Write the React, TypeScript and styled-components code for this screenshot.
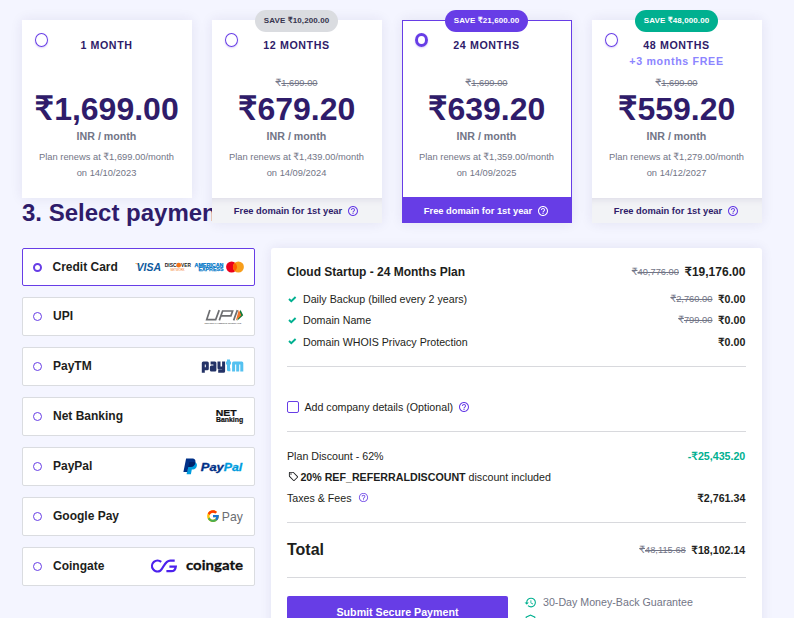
import React from 'react';
import styled, { createGlobalStyle, css } from 'styled-components';
import { MdHelpOutline, MdHistory, MdOutlineSell, MdOutlineVerifiedUser } from 'react-icons/md';
import { FcGoogle } from 'react-icons/fc';

const GlobalStyle = createGlobalStyle`
  * {
    box-sizing: border-box;
  }

  body {
    margin: 0;
    background: #f4f5ff;
    color: #1d1e20;
    font-family: 'Liberation Sans', Arial, sans-serif;
    overflow: hidden;
  }
`;

const Page = styled.main`
  width: 794px;
  height: 618px;
  padding: 20px 32px 0 22px;
  overflow: hidden;
`;

const Rupee = styled.span`
  font-family: Lato, 'DejaVu Sans', sans-serif;
  font-size: 1.07em;
  line-height: 0;
`;

/* ---------- plans ---------- */

const PlanList = styled.section`
  position: relative;
  z-index: 1;
  display: flex;
  align-items: flex-start;
  gap: 20px;
  height: 178px;
`;

const PlanCard = styled.article<{ $selected?: boolean }>`
  position: relative;
  width: 170px;
  flex-shrink: 0;
  background: #fff;
  text-align: center;
  box-shadow: 0 0 12px rgba(47, 28, 106, 0.09);
  ${props => props.$selected && css`
    outline: 1px solid #673de6;
    outline-offset: -1px;
  `}
`;

const SaveBadge = styled.div<{ $bg: string; $color: string }>`
  position: absolute;
  top: -10px;
  left: 43px;
  width: 83px;
  height: 22px;
  border-radius: 11px;
  background: ${props => props.$bg};
  color: ${props => props.$color};
  font-size: 8px;
  font-weight: bold;
  line-height: 21px;
  letter-spacing: 0.1px;
  white-space: nowrap;
`;

const PlanRadio = styled.span<{ $checked?: boolean }>`
  position: absolute;
  top: 13px;
  left: 13px;
  width: 13px;
  height: 14px;
  border-radius: 50%;
  border: ${props => (props.$checked ? 3 : 1)}px solid #673de6;
  box-shadow: 0 1px 2px rgba(103, 61, 230, 0.25);
`;

const PlanBody = styled.div`
  height: 178px;
  padding: 17px 1px 0 0;
`;

const PlanTitle = styled.h3`
  height: 16px;
  margin: 0;
  color: #2f1c6a;
  font-size: 10.67px;
  line-height: 16px;
  letter-spacing: 0.6px;
`;

const PlanBonus = styled.div`
  height: 21px;
  color: #8c85ff;
  font-size: 10.67px;
  font-weight: bold;
  line-height: 17px;
  letter-spacing: 0.67px;
`;

const OldPlanPrice = styled.div`
  height: 17px;
  color: #727586;
  font-size: 9.33px;
  line-height: 18px;
  text-decoration: line-through;
`;

const PlanPrice = styled.div`
  height: 36px;
  color: #2f1c6a;
  font-size: 32px;
  font-weight: bold;
  line-height: 36px;
`;

const PlanUnit = styled.div`
  height: 18px;
  color: #727586;
  font-size: 10.67px;
  font-weight: bold;
  line-height: 18px;
`;

const PlanRenewal = styled.p`
  margin: 4px 0 0;
  color: #727586;
  font-size: 9.33px;
  line-height: 16px;
  white-space: nowrap;
`;

const PlanFooter = styled.div<{ $selected?: boolean }>`
  display: flex;
  align-items: center;
  justify-content: center;
  gap: 5px;
  height: 25px;
  padding-right: 1px;
  background: ${props => (props.$selected ? '#673de6' : '#f2f3f6')};
  color: ${props => (props.$selected ? '#fff' : '#2f1c6a')};
  box-shadow: ${props => (props.$selected ? '0 -1px #673de6' : 'inset 0 8px 8px -8px rgba(47, 28, 106, 0.15)')};
  font-size: 9.33px;
  font-weight: bold;

  svg {
    color: ${props => (props.$selected ? '#fff' : '#673de6')};
  }
`;

const SectionTitle = styled.h2`
  margin: 0;
  height: 50px;
  color: #2f1c6a;
  font-size: 24px;
  line-height: 30px;
`;

/* ---------- payment methods ---------- */

const Checkout = styled.div`
  display: grid;
  grid-template-columns: 233px 491px;
  column-gap: 16px;
  align-items: start;
`;

const MethodList = styled.div`
  display: flex;
  flex-direction: column;
  gap: 11px;
`;

const Method = styled.div<{ $selected?: boolean }>`
  display: flex;
  align-items: center;
  height: ${props => (props.$selected ? 38 : 39)}px;
  padding: 0 10px;
  border: 1px solid ${props => (props.$selected ? '#673de6' : '#dadce0')};
  border-radius: 2px;
  background: #fff;
`;

const MethodRadio = styled.span<{ $checked?: boolean }>`
  width: 9px;
  height: 9px;
  border: ${props => (props.$checked ? 2 : 1)}px solid #673de6;
  border-radius: 50%;
`;

const MethodName = styled.span<{ $selected?: boolean }>`
  margin-left: ${props => (props.$selected ? 10.5 : 11)}px;
  padding-bottom: 1px;
  color: #1d1e20;
  font-size: 12px;
  font-weight: bold;
`;

const MethodLogo = styled.svg`
  display: block;
  margin-left: auto;
  overflow: visible;
  font-family: 'Liberation Sans', Arial, sans-serif;
`;

/* ---------- order summary ---------- */

const Summary = styled.section`
  height: 400px;
  padding: 12px 16px 0;
  border-radius: 3px;
  background: #fff;
  box-shadow: 0 0 12px rgba(47, 28, 106, 0.09);
`;

const Line = styled.div<{ $height: number }>`
  display: flex;
  align-items: center;
  height: ${props => props.$height}px;
  font-size: 10.67px;
  white-space: nowrap;
`;

const PlanName = styled.strong`
  font-size: 12px;
`;

const TotalLabel = styled.strong`
  font-size: 16px;
`;

const Label = styled.span<{ $indent?: number }>`
  margin-left: ${props => props.$indent ?? 0}px;
`;

const OldPrice = styled.s`
  margin-left: auto;
  color: #727586;
  font-size: 9.33px;
`;

const Price = styled.strong<{ $large?: boolean; $discount?: boolean; $after?: boolean }>`
  margin-left: ${props => (props.$after ? '5.5px' : 'auto')};
  margin-right: 0.7px;
  font-size: ${props => (props.$large ? 12 : 10.67)}px;
  color: ${props => (props.$discount ? '#00b090' : '#1d1e20')};
`;

const Divider = styled.hr<{ $top: number; $bottom: number }>`
  height: 1px;
  margin: ${props => props.$top}px 0 ${props => props.$bottom}px;
  border: 0;
  background: #d8d9dd;
`;

const Checkbox = styled.span`
  width: 12px;
  height: 12px;
  border: 1px solid #673de6;
  border-radius: 2px;
`;

const InlineHelp = styled(MdHelpOutline)<{ $faded?: boolean }>`
  margin-left: ${props => (props.$faded ? 6 : 5)}px;
  color: #673de6;
  opacity: ${props => (props.$faded ? 0.85 : 1)};
`;

const TagIcon = styled(MdOutlineSell)`
  margin-left: 1px;
`;

const SubmitRow = styled.div`
  display: flex;
  gap: 16px;
`;

const SubmitButton = styled.button`
  width: 221px;
  height: 32px;
  padding: 0;
  border: 0;
  border-radius: 2px;
  background: #673de6;
  color: #fff;
  font-family: inherit;
  font-size: 10.67px;
  font-weight: bold;
`;

const Guarantees = styled.div`
  display: flex;
  flex-direction: column;
  gap: 6px;
`;

const Guarantee = styled.div`
  display: flex;
  align-items: center;
  gap: 6px;
  height: 12px;
  color: #727586;
  font-size: 10.67px;

  svg {
    color: #00b090;
  }
`;

const Check = () => (
  <svg width="10" height="9" viewBox="0 0 10 9">
    <path d="M2 4 4.3 6.2 8.6 2" fill="none" stroke="#00b090" strokeWidth="1.9" />
  </svg>
);

const CardBrands = () => (
  <MethodLogo width="110" height="14" viewBox="0 0 110 14">
    <path d="M1 3.2h3.6l1.4 4L4.4 5 1 3.6z" fill="#f7a823" />
    <text x="2.6" y="10.9" fontSize="11" fontWeight="bold" fontStyle="italic" fill="#0e5a9e" textLength="24.6" lengthAdjust="spacingAndGlyphs">VISA</text>
    <text x="30.7" y="7.2" fontSize="5.6" fontWeight="bold" fill="#222" textLength="12" lengthAdjust="spacingAndGlyphs">DISC</text>
    <circle cx="44.7" cy="5.2" r="2.4" fill="#f47216" />
    <text x="47.1" y="7.2" fontSize="5.6" fontWeight="bold" fill="#222" textLength="9.8" lengthAdjust="spacingAndGlyphs">VER</text>
    <text x="36.5" y="10.9" fontSize="3" fill="#f47216" textLength="14" lengthAdjust="spacingAndGlyphs">NETWORK</text>
    <text x="60.5" y="6.8" fontSize="5.6" fontWeight="bold" fill="#0077c8" stroke="#0077c8" strokeWidth="0.25" textLength="29" lengthAdjust="spacingAndGlyphs">AMERICAN</text>
    <text x="64.5" y="11.2" fontSize="5.6" fontWeight="bold" fill="#0077c8" stroke="#0077c8" strokeWidth="0.25" textLength="25" lengthAdjust="spacingAndGlyphs">EXPRESS</text>
    <circle cx="97.6" cy="7" r="5.5" fill="#eb001b" />
    <circle cx="104.4" cy="7" r="5.5" fill="#f79e1b" />
    <path d="M101 2.7a5.5 5.5 0 0 1 0 8.6 5.5 5.5 0 0 1 0-8.6z" fill="#ff5f00" />
  </MethodLogo>
);

const UpiLogo = () => (
  <MethodLogo width="40" height="16" viewBox="0 0 40 16">
    <g fill="none" stroke="#6d6e71" strokeWidth="1.7">
      <path d="M5.9 1.1 2.7 10.6h9L15.2 1.1" />
      <path d="M15.3 11.4 18.6 2h10l-1.7 4.9H17.4" />
      <path d="M33.4 1.1 29.6 11.4" />
    </g>
    <path d="m36.4.8 2.8 5.4-6 5.5z" fill="#097939" />
    <path d="m34.8.8 2.6 5.4-5.6 5.5z" fill="#ed752e" />
    <text x="0.4" y="14.6" fontSize="2.5" fontWeight="bold" fill="#666" textLength="37" lengthAdjust="spacingAndGlyphs">UNIFIED PAYMENTS INTERFACE</text>
  </MethodLogo>
);

const PaytmLogo = () => (
  <MethodLogo width="43" height="15" viewBox="0 0 43 15">
    <g fill="none" strokeWidth="3" strokeLinejoin="round">
      <path d="M2.3 13.8V3.9h4v5.9H3.4" stroke="#233266" />
      <path d="M9.6 3.9h4.3v7.2h-3.5V7.9h3" stroke="#233266" />
      <path d="M18 2.4v6.5h4.2M22.6 2.4v9.9h-5.4" stroke="#233266" />
      <path d="M27.5.6v10.2h1.9M25 3.9h5" stroke="#54c1f0" />
      <path d="M32.6 12.6V3.9h8.2v8.7M36.7 3.9v8.7" stroke="#54c1f0" />
    </g>
  </MethodLogo>
);

const NetBankingLogo = () => (
  <MethodLogo width="28" height="17" viewBox="0 0 28 17">
    <text x="-0.3" y="7.6" fontSize="9.4" fontWeight="bold" fill="#111" stroke="#111" strokeWidth="0.2" textLength="21" lengthAdjust="spacingAndGlyphs">NET</text>
    <text x="0" y="14.4" fontSize="6.6" fontWeight="bold" fill="#111" stroke="#111" strokeWidth="0.2" textLength="27.2" lengthAdjust="spacingAndGlyphs">Banking</text>
  </MethodLogo>
);

const PaypalLogo = () => (
  <MethodLogo width="61" height="18" viewBox="0 0 61 18">
    <path d="M5.7 4.2h6.4c2.3 1 2.2 3.5 1.2 5.3-1 1.7-2.8 2-4.5 2l-.9 4.8H3.6z" fill="#009cde" />
    <path d="M3.1.5h5.7c3.3 0 4.3 1.9 3.4 4.8-.8 2.8-2.6 3.8-5.2 3.8H5.3l-1 4.9H.4z" fill="#003087" />
    <path d="M5.3 9.1H7c2.4 0 4.4-1 5.2-3.8l.1-.8c-2-.9-4.3-.5-5.9-.5z" fill="#012169" />
    <text x="17.8" y="13" fontSize="11.6" fontWeight="bold" fontStyle="italic" fill="#003087" stroke="#003087" strokeWidth="0.3" textLength="23" lengthAdjust="spacingAndGlyphs">Pay</text>
    <text x="40.8" y="13" fontSize="11.6" fontWeight="bold" fontStyle="italic" fill="#009cde" stroke="#009cde" strokeWidth="0.3" textLength="18.5" lengthAdjust="spacingAndGlyphs">Pal</text>
  </MethodLogo>
);

const GooglePayLogo = () => (
  <MethodLogo width="38" height="18" viewBox="0 0 38 18">
    <FcGoogle x="0" y="1.2" size={14} />
    <text x="15.8" y="13" fontSize="13.6" fill="#6b6e73" textLength="21" lengthAdjust="spacingAndGlyphs">Pay</text>
  </MethodLogo>
);

const CoingateLogo = () => (
  <MethodLogo width="94" height="17" viewBox="0 0 94 17">
    <g fill="none" stroke="#4c21ed" strokeWidth="2.2">
      <path d="M11.2 3.9A5.5 5.5 0 1 0 10.2 12.8C13.8 10.2 14.6 2.6 20.2 2.6h4.5" />
      <path d="M16.4 13.2h4.9c3 0 4.2-1.9 4.5-4.6h-6.4" />
    </g>
    <text x="36" y="11.6" fontFamily="Lato, sans-serif" fontSize="14" fontWeight="bold" fill="#111" stroke="#111" strokeWidth="0.3" textLength="57" lengthAdjust="spacingAndGlyphs">coingate</text>
  </MethodLogo>
);

const plans = [
  { title: '1 MONTH', price: '1,699.00', renewal: '1,699.00', date: '14/10/2023' },
  { title: '12 MONTHS', price: '679.20', renewal: '1,439.00', date: '14/09/2024', save: '10,200.00', badge: '#dadce0', badgeText: '#36344d' },
  { title: '24 MONTHS', price: '639.20', renewal: '1,359.00', date: '14/09/2025', save: '21,600.00', badge: '#673de6', badgeText: '#fff', selected: true },
  { title: '48 MONTHS', price: '559.20', renewal: '1,279.00', date: '14/12/2027', save: '48,000.00', badge: '#00b090', badgeText: '#fff', bonus: '+3 months FREE' },
];

const methods = [
  { name: 'Credit Card', logo: <CardBrands />, selected: true },
  { name: 'UPI', logo: <UpiLogo /> },
  { name: 'PayTM', logo: <PaytmLogo /> },
  { name: 'Net Banking', logo: <NetBankingLogo /> },
  { name: 'PayPal', logo: <PaypalLogo /> },
  { name: 'Google Pay', logo: <GooglePayLogo /> },
  { name: 'Coingate', logo: <CoingateLogo /> },
];

const Amount: React.FC<{ value: string }> = ({ value }) => (
  <>
    <Rupee>₹</Rupee>
    {value}
  </>
);

const App: React.FC = () => {
  return (
    <Page>
      <GlobalStyle />
      <PlanList>
        {plans.map(plan => (
          <PlanCard key={plan.title} $selected={plan.selected}>
            <PlanRadio $checked={plan.selected} />
            <PlanBody>
              <PlanTitle>{plan.title}</PlanTitle>
              <PlanBonus>{plan.bonus}</PlanBonus>
              <OldPlanPrice>{plan.save && <Amount value="1,699.00" />}</OldPlanPrice>
              <PlanPrice><Amount value={plan.price} /></PlanPrice>
              <PlanUnit>INR / month</PlanUnit>
              <PlanRenewal>
                Plan renews at <Amount value={plan.renewal} />/month
                <br />
                on {plan.date}
              </PlanRenewal>
            </PlanBody>
            {plan.save && (
              <>
                <PlanFooter $selected={plan.selected}>
                  Free domain for 1st year
                  <MdHelpOutline size={12} />
                </PlanFooter>
                <SaveBadge $bg={plan.badge} $color={plan.badgeText}>
                  SAVE <Amount value={plan.save} />
                </SaveBadge>
              </>
            )}
          </PlanCard>
        ))}
      </PlanList>

      <SectionTitle>3. Select payment</SectionTitle>

      <Checkout>
        <MethodList>
          {methods.map(method => (
            <Method key={method.name} $selected={method.selected}>
              <MethodRadio $checked={method.selected} />
              <MethodName $selected={method.selected}>{method.name}</MethodName>
              {method.logo}
            </Method>
          ))}
        </MethodList>

        <Summary>
          <Line $height={24}>
            <PlanName>Cloud Startup - 24 Months Plan</PlanName>
            <OldPrice><Amount value="40,776.00" /></OldPrice>
            <Price $large $after><Amount value="19,176.00" /></Price>
          </Line>
          <Line $height={30}>
            <Check />
            <Label $indent={6}>Daily Backup (billed every 2 years)</Label>
            <OldPrice><Amount value="2,760.00" /></OldPrice>
            <Price $after><Amount value="0.00" /></Price>
          </Line>
          <Line $height={12}>
            <Check />
            <Label $indent={6}>Domain Name</Label>
            <OldPrice><Amount value="799.00" /></OldPrice>
            <Price $after><Amount value="0.00" /></Price>
          </Line>
          <Line $height={31}>
            <Check />
            <Label $indent={6}>Domain WHOIS Privacy Protection</Label>
            <Price><Amount value="0.00" /></Price>
          </Line>

          <Divider $top={9} $bottom={30} />

          <Line $height={20}>
            <Checkbox />
            <Label $indent={5.4}>Add company details (Optional)</Label>
            <InlineHelp size={12} />
          </Line>

          <Divider $top={14} $bottom={13} />

          <Line $height={21}>
            <Label>Plan Discount - 62%</Label>
            <Price $discount>-<Amount value="25,435.20" /></Price>
          </Line>
          <Line $height={21}>
            <TagIcon size={11} />
            <Label $indent={1.4}>
              <strong>20% REF_REFERRALDISCOUNT</strong> discount included
            </Label>
          </Line>
          <Line $height={21}>
            <Label>Taxes &amp; Fees</Label>
            <InlineHelp size={11} $faded />
            <Price><Amount value="2,761.34" /></Price>
          </Line>

          <Divider $top={14} $bottom={16} />

          <Line $height={22}>
            <TotalLabel>Total</TotalLabel>
            <OldPrice><Amount value="48,115.68" /></OldPrice>
            <Price $after><Amount value="18,102.14" /></Price>
          </Line>

          <Divider $top={16} $bottom={18} />

          <SubmitRow>
            <SubmitButton>Submit Secure Payment</SubmitButton>
            <Guarantees>
              <Guarantee>
                <MdHistory size={13} />
                30-Day Money-Back Guarantee
              </Guarantee>
              <Guarantee>
                <MdOutlineVerifiedUser size={13} />
              </Guarantee>
            </Guarantees>
          </SubmitRow>
        </Summary>
      </Checkout>
    </Page>
  );
};

export default App;
